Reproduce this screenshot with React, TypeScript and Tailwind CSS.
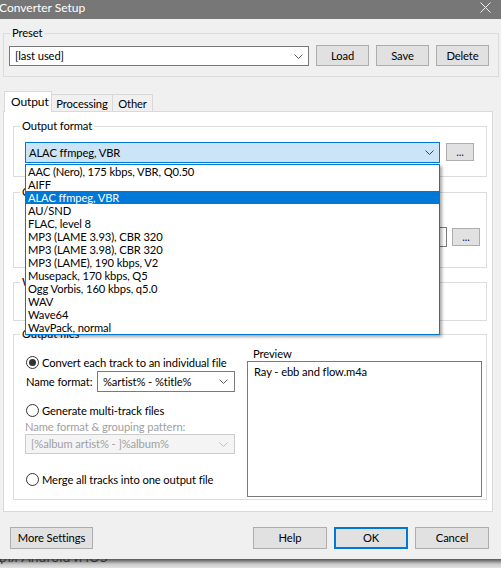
import React from "react";

const Chevron = ({ color = "#5a5a5a" }: { color?: string }) => (
  <svg width="9" height="5" viewBox="0 0 9 5" className="shrink-0">
    <path d="M0.5 0.5 L4.5 4.5 L8.5 0.5" fill="none" stroke={color} strokeWidth="1" />
  </svg>
);

const Radio = ({ checked, label }: { checked?: boolean; label: string }) => (
  <div className="flex items-center h-[13px] ml-[1px]">
    <span className="w-[13px] h-[13px] rounded-full border border-[#333333] bg-white flex items-center justify-center shrink-0">
      {checked && <span className="w-[7px] h-[7px] rounded-full bg-[#333333]" />}
    </span>
    <span className="ml-[3px] leading-[13px] whitespace-nowrap">{label}</span>
  </div>
);

const items = [
  "AAC (Nero), 175 kbps, VBR, Q0.50",
  "AIFF",
  "ALAC ffmpeg, VBR",
  "AU/SND",
  "FLAC, level 8",
  "MP3 (LAME 3.93), CBR 320",
  "MP3 (LAME 3.98), CBR 320",
  "MP3 (LAME), 190 kbps, V2",
  "Musepack, 170 kbps, Q5",
  "Ogg Vorbis, 160 kbps, q5.0",
  "WAV",
  "Wave64",
  "WavPack, normal",
];

export default function App() {
  return (
    <div className="w-[501px] h-[568px] overflow-hidden relative bg-[#f0f0f0] text-[11.2px] tracking-[-0.1px] text-black font-['Lato',sans-serif]">
      <div className="h-[559px] flex flex-col">
        {/* Title bar */}
        <div className="h-[19px] bg-[#777777] flex justify-between text-white shrink-0">
          <span className="leading-[15px] -ml-[1px] text-[12px] tracking-normal">Converter Setup</span>
          <svg width="11" height="11" viewBox="0 0 11 11" className="mt-[2px] mr-[10px]">
            <path d="M0.5 0.5 L10.5 10.5 M10.5 0.5 L0.5 10.5" stroke="#f2f2f2" strokeWidth="1" />
          </svg>
        </div>

        {/* Preset */}
        <fieldset className="mt-[7px] ml-[3px] w-[496px] border border-[#dcdcdc]">
          <legend className="ml-[6px] px-[2px] leading-[14px]">Preset</legend>
          <div className="pt-[5px] pb-[10px] pl-[5px] flex items-end">
            <div className="w-[300px] h-[20px] bg-white border border-[#7a7a7a] flex items-center justify-between pl-[5px] pr-[5px]">
              <span className="leading-[18px]">[last used]</span>
              <Chevron />
            </div>
            <button className="ml-[7px] w-[53px] h-[21px] bg-[#e1e1e1] border border-[#adadad] leading-[19px]">Load</button>
            <button className="ml-[7px] w-[53px] h-[21px] bg-[#e1e1e1] border border-[#adadad] leading-[19px]">Save</button>
            <button className="ml-[7px] w-[53px] h-[21px] bg-[#e1e1e1] border border-[#adadad] leading-[19px]">Delete</button>
          </div>
        </fieldset>

        {/* Tabs */}
        <div className="mt-[14px] ml-[4px] h-[20px] flex items-end relative z-10">
          <div className="w-[48px] h-[21px] -mb-[1px] bg-white border border-b-0 border-[#d9d9d9] pl-[6px] leading-[19px] text-[12px]">Output</div>
          <div className="w-[61px] h-[17px] border-t border-r border-[#d9d9d9] flex items-center justify-center leading-[15px]">Processing</div>
          <div className="w-[40px] h-[17px] border-t border-r border-[#d9d9d9] flex items-center justify-center leading-[15px]">Other</div>
        </div>

        {/* Panel */}
        <div className="ml-[3px] w-[490px] border border-[#d9d9d9] bg-white pl-[9px] pb-[11px]">
          {/* Output format */}
          <fieldset className="mt-[7px] w-[474px] border border-[#dcdcdc]">
            <legend className="ml-[6px] px-[2px] leading-[14px]">Output format</legend>
            <div className="pt-[9px] pb-[13px] pl-[11px] flex items-start">
              <div className="w-[415px] h-[21px] bg-[#cce4f7] border border-[#0078d7] flex items-center justify-between pl-[3px] pr-[5px]">
                <span className="leading-[19px]">ALAC ffmpeg, VBR</span>
                <Chevron color="#404040" />
              </div>
              <button className="ml-[6px] mt-[1px] w-[28px] h-[18px] bg-[#e1e1e1] border border-[#adadad] leading-[12px] text-[#1a1a5a]">...</button>
            </div>
          </fieldset>

          {/* Output path (hidden under list) */}
          <fieldset className="mt-[8px] w-[474px] border border-[#dcdcdc]">
            <legend className="ml-[6px] px-[2px] leading-[14px]">Output path</legend>
            <div className="pt-[28px] pb-[20px] pl-[11px] flex items-start">
              <div className="w-[422px] h-[20px] bg-white border border-[#7a7a7a]" />
              <button className="ml-[5px] mt-[1px] w-[28px] h-[18px] bg-[#e1e1e1] border border-[#adadad] leading-[12px] text-[#1a1a5a]">...</button>
            </div>
          </fieldset>

          {/* When done (hidden) */}
          <fieldset className="mt-[7px] w-[474px] border border-[#dcdcdc]">
            <legend className="ml-[6px] px-[2px] leading-[14px]">When done</legend>
            <div className="h-[31px]" />
          </fieldset>

          {/* Output files */}
          <fieldset className="mt-[6px] w-[474px] border border-[#dcdcdc]">
            <legend className="ml-[6px] px-[2px] leading-[14px]">Output files</legend>
            <div className="pl-[11px] pb-[2px] flex">
              <div className="w-[210px] flex flex-col">
                <div className="mt-[15px]">
                  <Radio checked label="Convert each track to an individual file" />
                </div>
                <div className="mt-[2px] flex items-center justify-between">
                  <span className="ml-[1px] leading-[15px] whitespace-nowrap">Name format:</span>
                  <div className="w-[138px] h-[21px] bg-white border border-[#7a7a7a] flex items-center justify-between pl-[5px] pr-[6px]">
                    <span className="leading-[19px] whitespace-nowrap">%artist% - %title%</span>
                    <Chevron />
                  </div>
                </div>
                <div className="mt-[12px]">
                  <Radio label="Generate multi-track files" />
                </div>
                <div className="mt-[3px] leading-[14px] text-[#a0a0a0] whitespace-nowrap">Name format &amp; grouping pattern:</div>
                <div className="w-[210px] h-[20px] bg-[#f4f4f4] border border-[#cccccc] flex items-center justify-between pl-[5px] pr-[6px]">
                  <span className="leading-[18px] text-[#a0a0a0] whitespace-nowrap">[%album artist% - ]%album%</span>
                  <Chevron color="#c0c0c0" />
                </div>
                <div className="mt-[19px]">
                  <Radio label="Merge all tracks into one output file" />
                </div>
              </div>
              <div className="ml-[12px] w-[235px] flex flex-col">
                <div className="mt-[5px] leading-[15px] pl-[6px]">Preview</div>
                <div className="h-[136px] border border-[#7a7a7a] bg-white pl-[6px] pt-[2px] leading-[15px]">Ray - ebb and flow.m4a</div>
              </div>
            </div>
          </fieldset>
        </div>

        {/* Bottom buttons */}
        <div className="mt-[15px] flex items-start">
          <button className="ml-[10px] w-[83px] h-[22px] bg-[#e1e1e1] border border-[#adadad] leading-[20px]">More Settings</button>
          <button className="ml-[160px] w-[74px] h-[22px] bg-[#e1e1e1] border border-[#adadad] leading-[20px]">Help</button>
          <button className="ml-[7px] w-[74px] h-[22px] bg-[#e1e1e1] border-2 border-[#0078d7] leading-[18px]">OK</button>
          <button className="ml-[7px] w-[74px] h-[22px] bg-[#e1e1e1] border border-[#adadad] leading-[20px]">Cancel</button>
        </div>
      </div>

      {/* Background beneath window */}
      <div className="h-[9px] overflow-hidden bg-[linear-gradient(#555555,#c8c8c8_55%,#e4e4e4)]">
        <div className="-mt-[11px] -ml-[6px] text-[14px] leading-[18px] tracking-normal text-[#333333] whitespace-nowrap">для Android и iOS</div>
      </div>

      {/* Open dropdown list */}
      <div className="absolute left-[25px] top-[164px] w-[415px] h-[171px] bg-white border border-[#0078d7] shadow-[2px_2px_3px_rgba(0,0,0,0.35)]">
        {items.map((t, i) => (
          <div
            key={t}
            className={
              i === 2
                ? "h-[13px] leading-[13px] pl-[2px] bg-[#0078d7] text-white whitespace-nowrap"
                : "h-[13px] leading-[13px] pl-[2px] whitespace-nowrap"
            }
          >
            {t}
          </div>
        ))}
      </div>
    </div>
  );
}
